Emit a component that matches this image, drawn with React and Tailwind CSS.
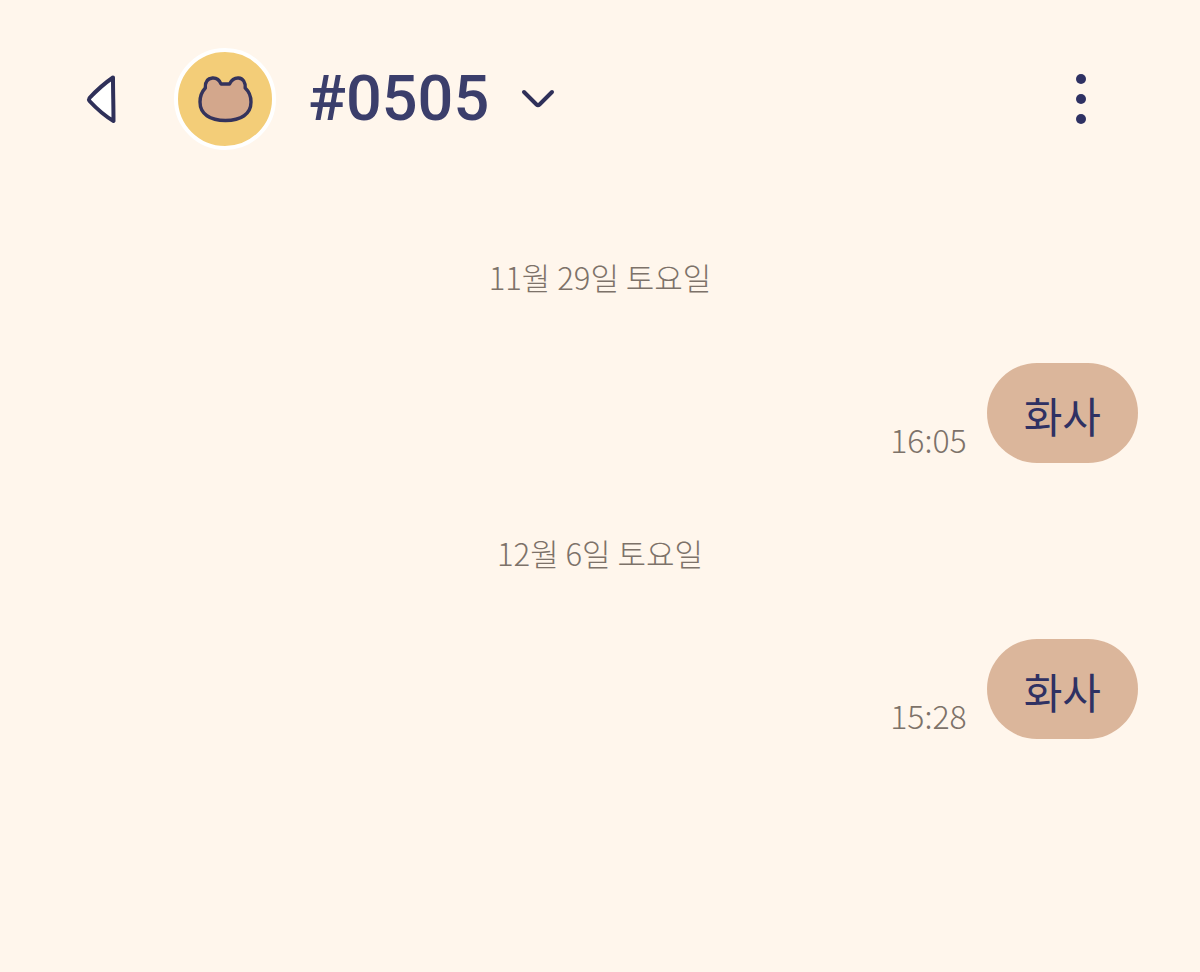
const days = [
  { date: "11월 29일 토요일", messages: [{ text: "화사", time: "16:05" }] },
  { date: "12월 6일 토요일", messages: [{ text: "화사", time: "15:28" }] },
];

function BackIcon() {
  return (
    <svg width="32" height="52" viewBox="0 0 32 52" aria-hidden="true">
      <path
        d="M27 4.5 C19 10 10 18 3.5 25 Q2.5 26.5 3.5 28 C10 35 19 43 27.5 48 C27.5 34 27 18 27 4.5 Z"
        fill="#ffffff"
        stroke="#2f3059"
        strokeWidth="4"
        strokeLinejoin="round"
      />
    </svg>
  );
}

function BearIcon() {
  return (
    <svg width="56" height="50" viewBox="0 0 56 50" aria-hidden="true">
      <path
        d="M24 10 C22.5 6 19 3.8 15.5 4 C10.5 4.3 8 8 8.3 14 C5 17.5 3 22.5 3 28 C3 40 13 46.5 28.5 46.5 C44 46.5 54 40 54 28 C54 22.5 52 17.5 48.2 14 C48.5 8 46 4.3 41.5 4 C38 3.8 34.5 6 32.5 10 Z"
        fill="#d3a78c"
        stroke="#34335c"
        strokeWidth="3.4"
        strokeLinejoin="round"
      />
    </svg>
  );
}

function ChevronIcon() {
  return (
    <svg width="34" height="20" viewBox="0 0 34 20" aria-hidden="true">
      <path
        d="M3 3 L15.5 15.5 Q17 17 18.5 15.5 L31 3"
        fill="none"
        stroke="#2f3059"
        strokeWidth="4"
        strokeLinecap="round"
        strokeLinejoin="round"
      />
    </svg>
  );
}

function MoreIcon() {
  return (
    <svg width="10" height="50" viewBox="0 0 10 50" fill="#2f3163" aria-hidden="true">
      <circle cx="5" cy="5" r="5" />
      <circle cx="5" cy="25" r="5" />
      <circle cx="5" cy="45" r="5" />
    </svg>
  );
}

function Message({ text, time }) {
  return (
    <div className="flex items-end justify-end gap-5">
      <time className="pb-1 text-[32px] leading-10 text-[#7d7269]">{time}</time>
      <p className="rounded-full bg-[#dbb69b] px-[37px] pt-[22px] pb-[18px] text-[42px] leading-[60px] font-normal text-[#2f3163]">
        {text}
      </p>
    </div>
  );
}

export default function App() {
  return (
    <div className="min-h-screen bg-[#fff6ec] font-['Noto_Sans_CJK_KR',sans-serif] font-light">
      <header className="flex items-center pt-12 pr-[76px] pl-[86px]">
        <button type="button" aria-label="뒤로" className="shrink-0">
          <BackIcon />
        </button>
        <div className="ml-14 flex size-[102px] shrink-0 items-center justify-center rounded-full border-4 border-white bg-[#f3cd78]">
          <BearIcon />
        </div>
        <button type="button" className="ml-8 flex items-center gap-8 text-[#3b3e6b]">
          <h1 className="font-[Roboto,sans-serif] text-[63px] leading-[72px] font-medium">#0505</h1>
          <ChevronIcon />
        </button>
        <button type="button" aria-label="더보기" className="ml-auto shrink-0 px-[38px]">
          <MoreIcon />
        </button>
      </header>

      <main className="flex flex-col gap-[71px] pt-[108px] pr-[62px] pb-16 pl-[62px]">
        {days.map((day) => (
          <section key={day.date} className="flex flex-col gap-[67px]">
            <h2 className="text-center text-[31px] leading-[38px] text-[#7d7269]">{day.date}</h2>
            {day.messages.map((m) => (
              <Message key={m.time} text={m.text} time={m.time} />
            ))}
          </section>
        ))}
      </main>
    </div>
  );
}
